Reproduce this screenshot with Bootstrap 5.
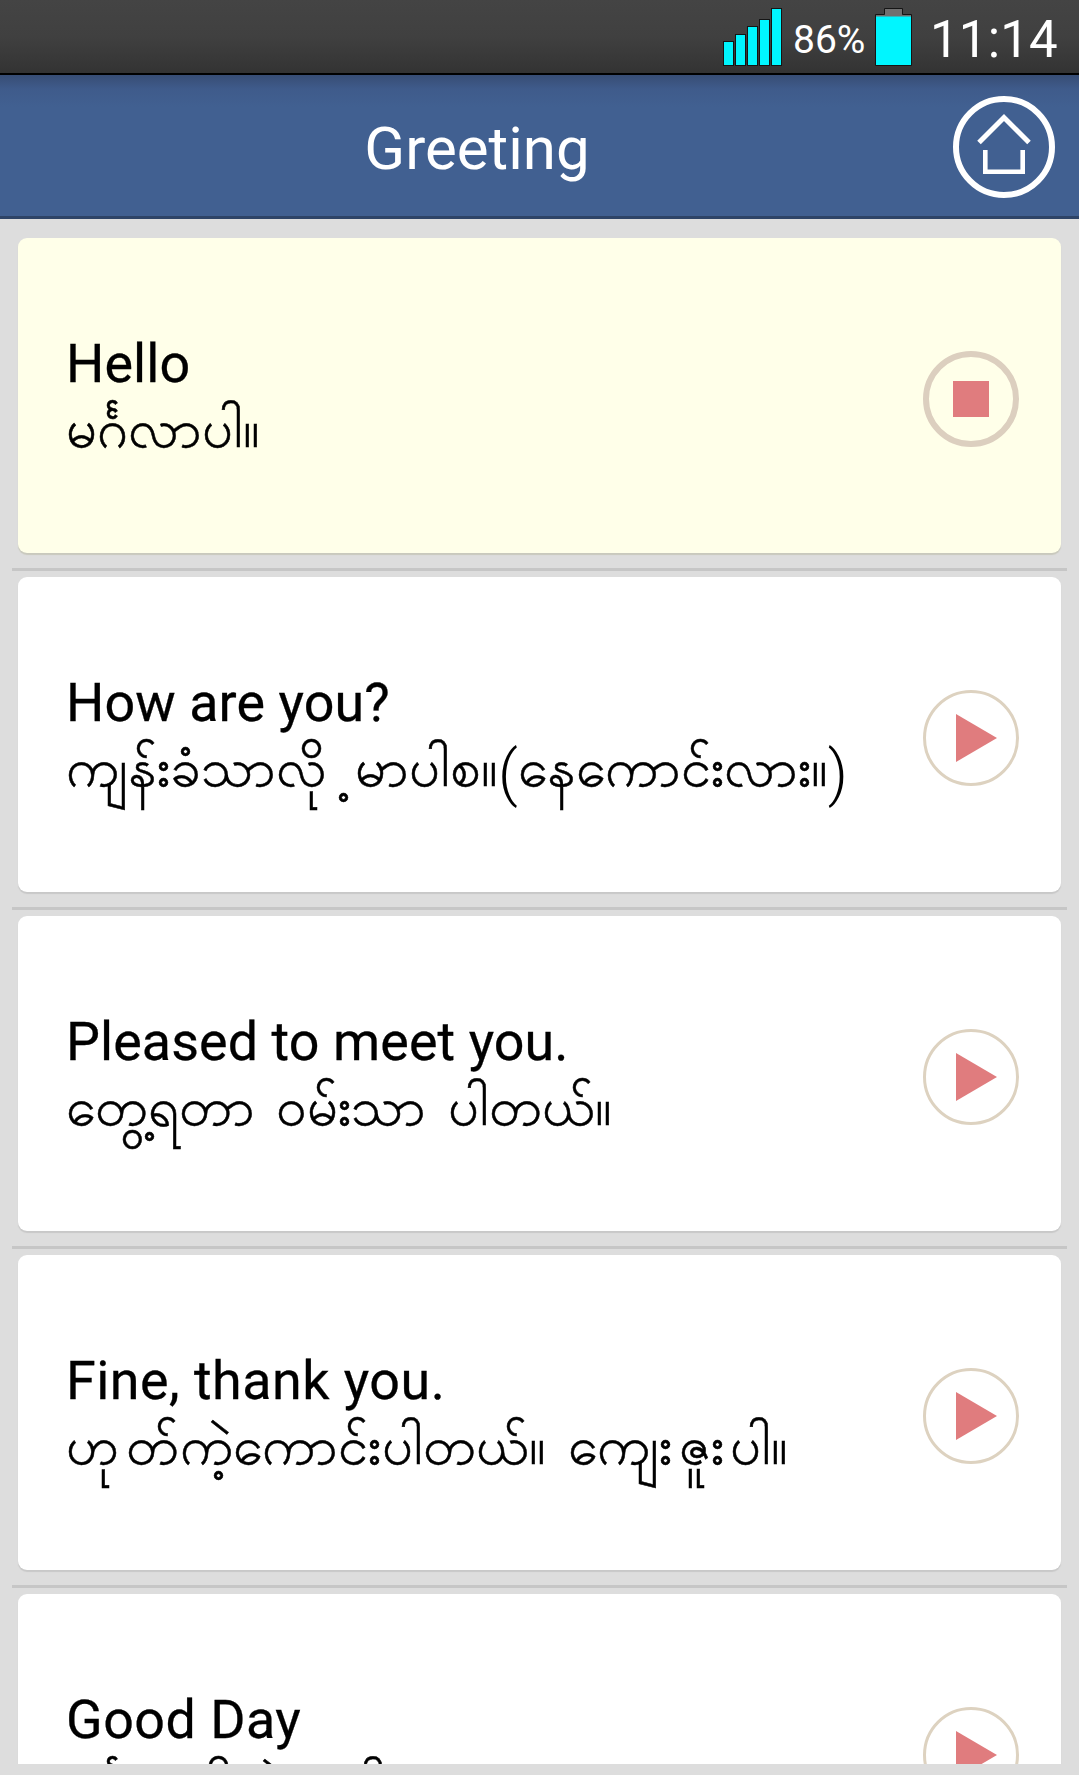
<!DOCTYPE html>
<html lang="en">
<head>
<meta charset="utf-8">
<meta name="viewport" content="width=device-width, initial-scale=1">
<title>Greeting</title>
<link href="https://cdn.jsdelivr.net/npm/bootstrap@5.3.0/dist/css/bootstrap.min.css" rel="stylesheet">
<style>
  body { background: #ddd; font-family: Roboto, "Noto Sans", sans-serif; color: #000; }
  .screen { height: 1775px; padding-bottom: 11px; }
  .status-bar { height: 75px; background: linear-gradient(#444, #404040 50%, #333); border-bottom: 2px solid #000; color: #fff; padding-right: 21px; }
  .status-bar svg { display: block; }
  .pct { font-size: 39px; line-height: 73px; width: 71px; margin: 4px 10px 0 10px; }
  .clock { font-size: 51px; line-height: 73px; letter-spacing: .2px; margin: 3px 0 0 18px; }
  .title-bar { height: 144px; background: linear-gradient(#374d75, #3f5b8b 14px, #416091 32px, #416091); border-bottom: 3px solid #2e4467; padding: 3px 24px 0 0; }
  .title-bar h1 { color: #fff; font-size: 60px; font-weight: 400; line-height: 70px; padding: 4px 0 0 1px; }
  .phrases { padding: 19px 12px 0; }
  .phrase { height: 315px; margin: 0 6px; border-radius: 9px; background: #fff; box-shadow: 0 2px 1px #c8c8c8; padding: 0 42px 0 48px; }
  .phrase.playing { background: #ffffe9; box-shadow: 0 2px 1px #c9c9bd; }
  .rule { height: 3px; margin: 15px 0 6px; background: #c6c6c6; }
  .en { font-size: 53.8px; line-height: 64px; letter-spacing: .1px; margin-top: 94px; white-space: nowrap; -webkit-text-stroke: .3px #000; }
  .en-wide { letter-spacing: .5px; }
  .my { font-size: 54px; line-height: 80px; margin-top: -7px; word-spacing: 8px; white-space: nowrap; -webkit-text-stroke: .5px #000; }
  .my-wide { letter-spacing: .3px; }
  .paren { font-family: Roboto, sans-serif; font-weight: 300; font-size: 62px; line-height: 1; vertical-align: -8px; -webkit-text-stroke: 0; }
  .gap-after { margin-right: 7px; }
  .gap-around { margin: 0 6px 0 6px; }
  .ctl { margin-top: 113px; width: 96px; height: 96px; }
</style>
</head>
<body>
<div class="screen d-flex flex-column overflow-hidden">
  <div class="status-bar d-flex justify-content-end flex-shrink-0">
    <svg width="62" height="73" fill="#00f6ff" stroke="#151515" stroke-width="1">
      <rect x="2.5" y="41.5" width="10" height="24"/><rect x="14.5" y="34.5" width="10" height="31"/><rect x="26.5" y="26.5" width="10" height="39"/><rect x="38.5" y="19.5" width="10" height="46"/><rect x="50.5" y="8.5" width="10" height="57"/>
    </svg>
    <div class="pct">86%</div>
    <svg width="38" height="73"><path d="M1.5 65.5V14.500H10.500V8.500H28.500V14.500H37.500V65.500Z" fill="#707070" stroke="#151515"/><path d="M2 16.500H37V65H2Z" fill="#00f6ff"/></svg>
    <div class="clock">11:14</div>
  </div>
  <header class="title-bar d-flex align-items-center flex-shrink-0">
    <h1 class="flex-grow-1 text-center mb-0">Greeting</h1>
    <svg width="102" height="102" fill="none" stroke="#fff"><circle cx="51" cy="51" r="48" stroke-width="6"/><path d="M26 46.500 51 21.500 76 46.500" stroke-width="5"/><path d="M32.300 54V75.800H69.700V54" stroke-width="4.600"/></svg>
  </header>
  <main class="phrases flex-grow-1 overflow-hidden">
    <div class="phrase playing d-flex justify-content-between">
      <div><div class="en">Hello</div><div class="my" lang="my">မင်္ဂလာပါ။</div></div>
      <svg class="ctl"><circle cx="48" cy="48" r="45" fill="none" stroke="#dccfbf" stroke-width="6"/><path d="M30 30H66V66H30Z" fill="#e07c7e"/></svg>
    </div>
    <div class="rule"></div>
    <div class="phrase d-flex justify-content-between">
      <div><div class="en">How are you?</div><div class="my" lang="my">ကျန်းခံသာလို&nbsp;့မာပါစ။<span class="paren">(</span>နေကောင်းလား။<span class="paren">)</span></div></div>
      <svg class="ctl"><circle cx="48" cy="48" r="46.500" fill="none" stroke="#ddd2c0" stroke-width="3"/><path d="M33 24 74 48 33 72Z" fill="#e07c7e"/></svg>
    </div>
    <div class="rule"></div>
    <div class="phrase d-flex justify-content-between">
      <div><div class="en">Pleased to meet you.</div><div class="my" lang="my">တွေ့ရတာ ဝမ်းသာ ပါတယ်။</div></div>
      <svg class="ctl"><circle cx="48" cy="48" r="46.500" fill="none" stroke="#ddd2c0" stroke-width="3"/><path d="M33 24 74 48 33 72Z" fill="#e07c7e"/></svg>
    </div>
    <div class="rule"></div>
    <div class="phrase d-flex justify-content-between">
      <div><div class="en en-wide">Fine, thank you.</div><div class="my my-wide" lang="my"><span class="gap-after">ဟု</span>တ်ကဲ့ကောင်းပါတယ်။ ကျေး<span class="gap-around">ဇူး</span>ပါ။</div></div>
      <svg class="ctl"><circle cx="48" cy="48" r="46.500" fill="none" stroke="#ddd2c0" stroke-width="3"/><path d="M33 24 74 48 33 72Z" fill="#e07c7e"/></svg>
    </div>
    <div class="rule"></div>
    <div class="phrase d-flex justify-content-between">
      <div><div class="en en-wide">Good Day</div><div class="my" lang="my">မင်္ဂလာရှိတဲ့နေ့ပါ။</div></div>
      <svg class="ctl"><circle cx="48" cy="48" r="46.500" fill="none" stroke="#ddd2c0" stroke-width="3"/><path d="M33 24 74 48 33 72Z" fill="#e07c7e"/></svg>
    </div>
  </main>
</div>
<script src="https://cdn.jsdelivr.net/npm/bootstrap@5.3.0/dist/js/bootstrap.bundle.min.js"></script>
</body>
</html>
